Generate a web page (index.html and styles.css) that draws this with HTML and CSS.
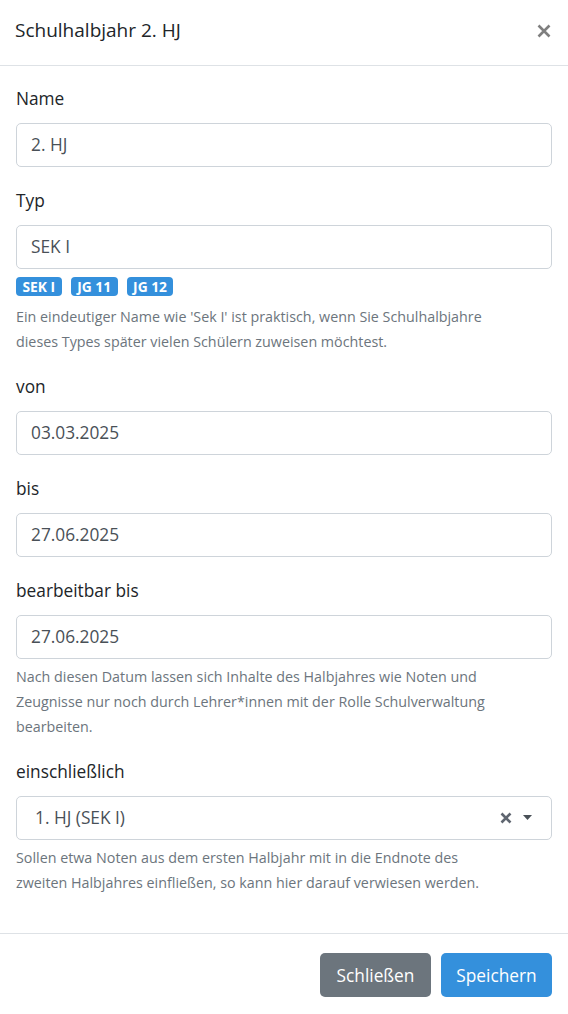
FILE: index.html
```html
<!DOCTYPE html>
<html lang="de">
<head>
<meta charset="utf-8">
<title>Schulhalbjahr 2. HJ</title>
<link rel="stylesheet" href="styles.css">
</head>
<body>
<div class="modal">
  <header class="modal-header">
    <h5 class="modal-title">Schulhalbjahr 2. HJ</h5>
    <button class="close" type="button" aria-label="Close">
      <svg width="14" height="14" viewBox="0 0 14 14"><path d="M1.5 1.5 L12.5 12.5 M12.5 1.5 L1.5 12.5" stroke="#7f7f7f" stroke-width="2.6" stroke-linecap="butt"/></svg>
    </button>
  </header>
  <div class="modal-body">
    <div class="form-group">
      <label class="label">Name</label>
      <div class="form-control">2. HJ</div>
    </div>
    <div class="form-group help-group">
      <label class="label">Typ</label>
      <div class="form-control">SEK I</div>
      <div class="badges">
        <span class="badge">SEK I</span>
        <span class="badge">JG 11</span>
        <span class="badge">JG 12</span>
      </div>
      <small class="form-text tight">Ein eindeutiger Name wie 'Sek I' ist praktisch, wenn Sie Schulhalbjahre<br>dieses Types später vielen Schülern zuweisen möchtest.</small>
    </div>
    <div class="form-group">
      <label class="label">von</label>
      <div class="form-control">03.03.2025</div>
    </div>
    <div class="form-group">
      <label class="label">bis</label>
      <div class="form-control">27.06.2025</div>
    </div>
    <div class="form-group help-group">
      <label class="label">bearbeitbar bis</label>
      <div class="form-control">27.06.2025</div>
      <small class="form-text">Nach diesen Datum lassen sich Inhalte des Halbjahres wie Noten und<br>Zeugnisse nur noch durch Lehrer*innen mit der Rolle Schulverwaltung<br>bearbeiten.</small>
    </div>
    <div class="form-group last">
      <label class="label">einschließlich</label>
      <div class="form-control select">
        <span class="select-value">1. HJ (SEK I)</span>
        <span class="select-actions">
          <svg class="clear" width="12" height="12" viewBox="0 0 12 12"><path d="M1.5 1.5 L10.5 10.5 M10.5 1.5 L1.5 10.5" stroke="#5f6670" stroke-width="2.6"/></svg>
          <svg class="caret" width="9" height="5" viewBox="0 0 9 5"><path d="M0 0 H9 L4.5 5 Z" fill="#495057"/></svg>
        </span>
      </div>
      <small class="form-text">Sollen etwa Noten aus dem ersten Halbjahr mit in die Endnote des<br>zweiten Halbjahres einfließen, so kann hier darauf verwiesen werden.</small>
    </div>
  </div>
  <footer class="modal-footer">
    <button class="btn btn-secondary" type="button">Schließen</button>
    <button class="btn btn-primary" type="button">Speichern</button>
  </footer>
</div>
</body>
</html>
```
FILE: styles.css
```css
* { box-sizing: border-box; }
html, body { margin: 0; padding: 0; background: #fff; }
body {
  font-family: "Open Sans", Lato, sans-serif;
  font-size: 17.3px;
  color: #212529;
  line-height: 1.6;
}
.modal { width: 568px; background: #fff; }
.modal-header {
  display: flex;
  align-items: center;
  justify-content: space-between;
  height: 66px;
  padding: 0 16px 4px 15px;
  border-bottom: 1px solid #dee2e6;
}
.modal-title {
  margin: 0;
  font-size: 19px;
  font-weight: 400;
  line-height: 29px;
}
.close {
  border: 0;
  background: none;
  padding: 0;
  margin-right: 1px;
  width: 14px;
  height: 14px;
  display: flex;
}
.modal-body { padding: 19px 16px 18.5px; }
.form-group { margin-bottom: 20px; }
.form-group.help-group { margin-bottom: 19px; }
.form-group.last { margin-bottom: 20px; }
.label {
  display: block;
  line-height: 28px;
  margin-bottom: 10px;
}
.form-control {
  height: 44px;
  border: 1px solid #ced4da;
  border-radius: 5px;
  padding: 0 14px;
  display: flex;
  align-items: center;
  color: #495057;
}
.badges {
  display: flex;
  gap: 9px;
  margin-top: 8px;
  height: 19px;
}
.badge {
  background: #3490dc;
  color: #fff;
  font-weight: 700;
  font-size: 13.8px;
  line-height: 19px;
  padding: 0 6.5px;
  border-radius: 4px;
  white-space: nowrap;
}
.form-text {
  display: block;
  font-size: 14.3px;
  line-height: 25px;
  color: #6c757d;
  margin-top: 5px;
  white-space: nowrap;
}
.form-text.tight { margin-top: 7.5px; }
.select { justify-content: space-between; padding: 0 19px 0 18px; }
.select-actions { display: flex; align-items: center; gap: 11px; }
.modal-footer {
  border-top: 1px solid #dee2e6;
  padding: 19px 16px 17px;
  display: flex;
  justify-content: flex-end;
  gap: 10px;
}
.btn {
  font-family: inherit;
  font-size: 17.3px;
  width: 111px;
  height: 44px;
  border: 0;
  border-radius: 5px;
  color: #fff;
  padding: 0;
}
.btn-secondary { background: #6c757d; }
.btn-primary { background: #3490dc; }
```
